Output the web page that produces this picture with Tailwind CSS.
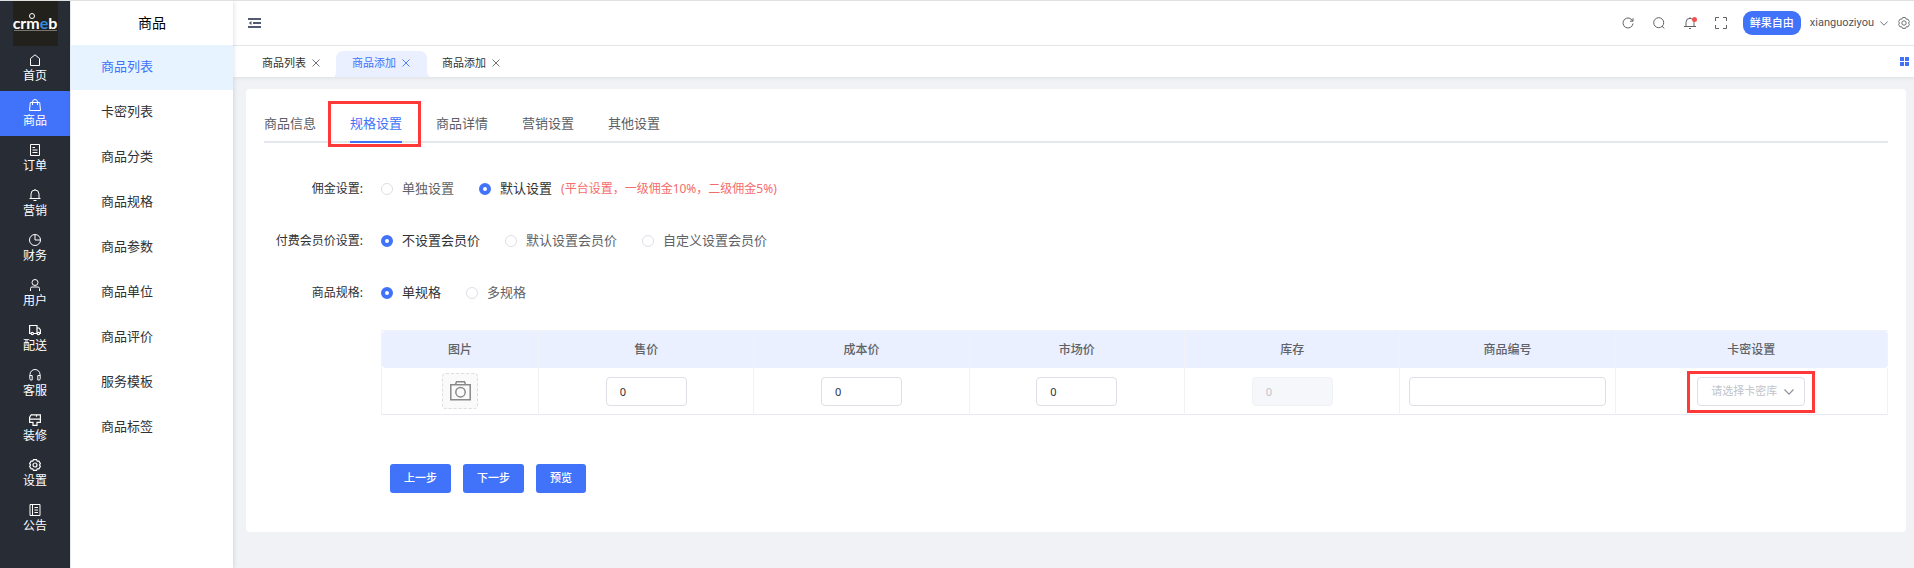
<!DOCTYPE html>
<html lang="zh-CN">

<head>
    <meta charset="UTF-8">
    <meta name="viewport" content="width=device-width, initial-scale=1.0">
    <title>商品添加</title>
    <script src="https://cdn.jsdelivr.net/npm/@tailwindcss/browser@4"></script>
</head>

<body class="flex min-h-screen border-t border-[#dfe1e1] bg-[#f0f2f5] font-['Noto_Sans','Noto_Sans_CJK_SC',sans-serif] text-[13px] text-[#303133]">
    <!-- main menu -->
    <aside class="w-[70px] shrink-0 bg-[#282c34] text-xs text-white">
        <a href="#" class="relative mx-auto flex size-[45px] flex-col items-center bg-[#23211c] pt-3 font-['Lato',sans-serif] text-base leading-5 font-bold">
            <span>crm<span class="text-[#2f8be0]">e</span>b</span>
            <span class="absolute top-3 left-4 size-[6px] rounded-full border border-white"></span>
            <span class="absolute top-[29px] h-px w-[43px] bg-[#77756f]"></span>
        </a>
        <nav class="leading-4">
            <a href="#" class="flex h-[45px] flex-col items-center gap-0.5 pt-2">
                <svg class="size-3" viewBox="0 0 12 12" fill="none" stroke="currentColor"><path d="M1.500 11.500V4.500L6 .8l4.500 3.700v7z" /></svg>
                <span>首页</span>
            </a>
            <a href="#" class="flex h-[45px] flex-col items-center gap-0.5 bg-[#4073fa] pt-2">
                <svg class="size-3" viewBox="0 0 12 12" fill="none" stroke="currentColor"><path d="M1.300 3.500h9.400l.8 8H.5zM3.500 6V3a2.500 2.500 0 0 1 5 0v3" /></svg>
                <span>商品</span>
            </a>
            <a href="#" class="flex h-[45px] flex-col items-center gap-0.5 pt-2">
                <svg class="size-3" viewBox="0 0 12 12" fill="none" stroke="currentColor"><path d="M1.500.5h9v11h-9zM3.500 3.500H6M3.500 6h5M3.500 8.500h5" /></svg>
                <span>订单</span>
            </a>
            <a href="#" class="flex h-[45px] flex-col items-center gap-0.5 pt-2">
                <svg class="size-3" viewBox="0 0 12 12" fill="none" stroke="currentColor"><path d="M.5 9.500h11M2 9.500V5a4 4 0 0 1 8 0v4.500M6 0v1M4.500 11.500h3" /></svg>
                <span>营销</span>
            </a>
            <a href="#" class="flex h-[45px] flex-col items-center gap-0.5 pt-2">
                <svg class="size-3" viewBox="0 0 12 12" fill="none" stroke="currentColor"><circle cx="6" cy="6" r="5.500" /><path d="M6 .5V6h5.500" /></svg>
                <span>财务</span>
            </a>
            <a href="#" class="flex h-[45px] flex-col items-center gap-0.5 pt-2">
                <svg class="size-3" viewBox="0 0 12 12" fill="none" stroke="currentColor"><circle cx="6" cy="3.500" r="3" /><path d="M1.500 12V9.500a1.500 1.500 0 0 1 1.500-1.500h6a1.500 1.500 0 0 1 1.500 1.500V12" /></svg>
                <span>用户</span>
            </a>
            <a href="#" class="flex h-[45px] flex-col items-center gap-0.5 pt-2">
                <svg class="size-3" viewBox="0 0 12 12" fill="none" stroke="currentColor" stroke-width="1.200"><path d="M2 9.500H.6v-8h7.400v8H4.500M8 4h2l1.400 2v3.500H11M8 9.500h.5" /><circle cx="3.300" cy="9.500" r="1.200" /><circle cx="9.500" cy="9.500" r="1.200" /></svg>
                <span>配送</span>
            </a>
            <a href="#" class="flex h-[45px] flex-col items-center gap-0.5 pt-2">
                <svg class="size-3" viewBox="0 0 12 12" fill="none" stroke="currentColor"><path d="M1 7V5.500a5 5 0 0 1 10 0V7M.8 6.500h2.400v4.500H2A1.200 1.200 0 0 1 .8 9.800zM11.200 6.500H8.800v4.500H10a1.200 1.200 0 0 0 1.200-1.200z" /></svg>
                <span>客服</span>
            </a>
            <a href="#" class="flex h-[45px] flex-col items-center gap-0.5 pt-2">
                <svg class="size-3" viewBox="0 0 12 12" fill="none" stroke="currentColor" stroke-width="1.200"><path d="M2 .8h9.400v4.400H.6V3.500L2 .8M7.500.8v2M.6 5.200v3.200h3.400v3h4v-3h3.400V5.200" /></svg>
                <span>装修</span>
            </a>
            <a href="#" class="flex h-[45px] flex-col items-center gap-0.5 pt-2">
                <svg class="size-3" viewBox="0 0 12 12" fill="none" stroke="currentColor" stroke-width="1.200"><path d="M4.500.6h3l.7 1.600 1.700-.1 1.500 2.500L10.500 6l.9 1.400-1.500 2.500-1.700-.1-.7 1.600h-3l-.7-1.600-1.700.1L.6 7.400 1.500 6 .6 4.600l1.500-2.500 1.700.1z" /><circle cx="6" cy="6" r="2" /></svg>
                <span>设置</span>
            </a>
            <a href="#" class="flex h-[45px] flex-col items-center gap-0.5 pt-2">
                <svg class="size-3" viewBox="0 0 12 12" fill="none" stroke="currentColor"><path d="M1 .5h10v11H1zM3.500.5v11M5.500 3.500H9M5.500 6H9M5.500 8.500H9" /></svg>
                <span>公告</span>
            </a>
        </nav>
    </aside>

    <!-- sub menu -->
    <aside class="z-10 w-[163px] shrink-0 border-l border-[#e6e9f0] bg-white shadow-[1px_0_4px_rgba(0,21,41,0.12)]">
        <h1 class="flex h-11 items-center justify-center text-sm text-black">商品</h1>
        <nav>
            <a href="#" class="flex h-[45px] items-center bg-[#e7f3ff] pb-0.5 pl-[30px] text-[#4073fa]">商品列表</a>
            <a href="#" class="flex h-[45px] items-center pb-0.5 pl-[30px]">卡密列表</a>
            <a href="#" class="flex h-[45px] items-center pb-0.5 pl-[30px]">商品分类</a>
            <a href="#" class="flex h-[45px] items-center pb-0.5 pl-[30px]">商品规格</a>
            <a href="#" class="flex h-[45px] items-center pb-0.5 pl-[30px]">商品参数</a>
            <a href="#" class="flex h-[45px] items-center pb-0.5 pl-[30px]">商品单位</a>
            <a href="#" class="flex h-[45px] items-center pb-0.5 pl-[30px]">商品评价</a>
            <a href="#" class="flex h-[45px] items-center pb-0.5 pl-[30px]">服务模板</a>
            <a href="#" class="flex h-[45px] items-center pb-0.5 pl-[30px]">商品标签</a>
        </nav>
    </aside>

    <div class="min-w-0 flex-1">
        <header class="flex h-[45px] items-center border-b border-[#e8eaee] bg-white pr-1 pl-[15px] text-[#515a6e]">
            <button aria-label="折叠菜单">
                <svg class="h-3 w-[13px]" viewBox="0 0 13 12" fill="none" stroke="currentColor" stroke-width="2"><path d="M0 2h13M5 6h8M0 10h13" /><path d="M3.500 4v4L.8 6z" fill="currentColor" stroke="none" /></svg>
            </button>
            <div class="ml-auto flex items-center">
                <div class="mr-4 flex items-center gap-[19px] text-[#606266]">
                    <button aria-label="刷新"><svg class="size-3" viewBox="0 0 12 12" fill="none" stroke="currentColor"><path d="M10.700 4.200A5 5 0 1 0 11 6.500M11 1.200v3H8" /></svg></button>
                    <button aria-label="搜索"><svg class="size-3" viewBox="0 0 12 12" fill="none" stroke="currentColor"><circle cx="5.700" cy="5.700" r="5" /><path d="m9 9.200 2.400 2.300" /></svg></button>
                    <button aria-label="消息" class="relative">
                        <svg class="size-3" viewBox="0 0 12 12" fill="none" stroke="currentColor"><path d="M0 9.500h12M2 9.500V5.300a4 4 0 0 1 8 0v4.200M5 11.500h2M6 .3v1" /></svg>
                        <span class="absolute top-0 -right-px size-[5px] rounded-full bg-[#f55353]"></span>
                    </button>
                    <button aria-label="全屏"><svg class="size-3" viewBox="0 0 12 12" fill="none" stroke="currentColor"><path d="M.5 4V.5H4M8 .5h3.500V4M11.500 8v3.500H8M4 11.500H.5V8" /></svg></button>
                </div>
                <button class="mr-[9px] h-6 rounded-[9px] bg-[#4073fa] px-[7px] text-[11px] font-medium text-white">鲜果自由</button>
                <button class="mr-[10px] flex items-center gap-[6px] font-['Roboto',sans-serif] text-[11px] text-[#515459]">
                    xianguoziyou
                    <svg class="h-[5px] w-2" viewBox="0 0 8 5" fill="none" stroke="currentColor" stroke-width=".8"><path d="m.3.500 3.700 3.700L7.700.5" /></svg>
                </button>
                <button aria-label="系统设置"><svg class="size-3 text-[#606266]" viewBox="0 0 12 12" fill="none" stroke="currentColor" stroke-width=".9"><path d="M4.500.6h3l.7 1.600 1.700-.1 1.500 2.500L10.500 6l.9 1.400-1.500 2.500-1.700-.1-.7 1.600h-3l-.7-1.600-1.700.1L.6 7.400 1.500 6 .6 4.600l1.500-2.500 1.700.1z" /><circle cx="6" cy="6" r="2.200" /></svg></button>
            </div>
        </header>

        <!-- opened pages -->
        <div class="flex h-[31px] items-end bg-white pr-[5px] pl-[14px] text-[11px] shadow-[0_1px_4px_rgba(0,21,41,0.08)]">
            <div class="flex h-[26px] w-[90px] items-center gap-[6px] pb-0.5 pl-[15px]">
                <a href="#">商品列表</a>
                <button aria-label="关闭商品列表"><svg class="size-2" viewBox="0 0 8 8" fill="none" stroke="#606266" stroke-width=".9"><path d="m.5.500 7 7m0-7-7 7" /></svg></button>
            </div>
            <div class="relative flex h-[26px] w-[90px] items-center gap-[6px] pb-0.5 pl-[15px] text-[#4073fa]">
                <svg class="absolute top-0 -left-[3px] h-[26px] w-24" viewBox="0 0 96 26" fill="#eaf0ff"><path d="M0 26q2-2 2-6V8q0-8 8-8h75q8 0 8 8v12q0 4 3 6z" /></svg>
                <a href="#" class="relative">商品添加</a>
                <button aria-label="关闭商品添加" class="relative"><svg class="size-2" viewBox="0 0 8 8" fill="none" stroke="currentColor" stroke-width=".9"><path d="m.5.500 7 7m0-7-7 7" /></svg></button>
            </div>
            <div class="flex h-[26px] w-[90px] items-center gap-[6px] pb-0.5 pl-[15px]">
                <a href="#">商品添加</a>
                <button aria-label="关闭商品添加"><svg class="size-2" viewBox="0 0 8 8" fill="none" stroke="#606266" stroke-width=".9"><path d="m.5.500 7 7m0-7-7 7" /></svg></button>
            </div>
            <button aria-label="标签操作" class="ml-auto self-center"><svg class="size-[9px]" viewBox="0 0 9 9" fill="#4073fa"><path d="M0 0h4v4H0zM5 0h4v4H5zM0 5h4v4H0zM5 5h4v4H5z" /></svg></button>
        </div>

        <main class="pt-3 pr-2 pb-[35px] pl-[13px]">
            <form class="rounded bg-white px-[18px] pt-[18px] pb-[39px]">
                <div class="flex h-9 gap-[34px] border-b-2 border-[#e4e7ed] text-[#5a5e66]">
                    <button type="button" class="-mb-0.5 border-b-2 border-transparent">商品信息</button>
                    <button type="button" class="relative -mb-0.5 border-b-2 border-[#4073fa] text-[#4073fa]">
                        规格设置
                        <span class="absolute -top-[6px] -right-[19px] -bottom-[6px] -left-[22px] border-3 border-[#ff3838]"></span>
                    </button>
                    <button type="button" class="-mb-0.5 border-b-2 border-transparent">商品详情</button>
                    <button type="button" class="-mb-0.5 border-b-2 border-transparent">营销设置</button>
                    <button type="button" class="-mb-0.5 border-b-2 border-transparent">其他设置</button>
                </div>

                <div class="mt-5">
                    <div class="flex h-[52px] items-center" role="radiogroup" aria-labelledby="brokerage">
                        <span id="brokerage" class="w-[117px] shrink-0 pr-[18px] text-right text-xs">佣金设置:</span>
                        <div class="flex items-center gap-[25px] text-[#606266]">
                            <label class="flex items-center gap-[9px]"><input type="radio" name="brokerage" class="size-3 appearance-none rounded-full border border-[#dcdfe6] checked:border-4 checked:border-[#4073fa]">单独设置</label>
                            <label class="flex items-center gap-[9px] text-[#303133]"><input type="radio" name="brokerage" checked class="size-3 appearance-none rounded-full border border-[#dcdfe6] checked:border-4 checked:border-[#4073fa]">默认设置</label>
                        </div>
                        <span class="ml-[9px] text-xs text-[#f56c6c]">(平台设置，一级佣金10%，二级佣金5%)</span>
                    </div>
                    <div class="flex h-[52px] items-center" role="radiogroup" aria-labelledby="vip">
                        <span id="vip" class="w-[117px] shrink-0 pr-[18px] text-right text-xs">付费会员价设置:</span>
                        <div class="flex items-center gap-[25px] text-[#606266]">
                            <label class="flex items-center gap-[9px] text-[#303133]"><input type="radio" name="vip" checked class="size-3 appearance-none rounded-full border border-[#dcdfe6] checked:border-4 checked:border-[#4073fa]">不设置会员价</label>
                            <label class="flex items-center gap-[9px]"><input type="radio" name="vip" class="size-3 appearance-none rounded-full border border-[#dcdfe6] checked:border-4 checked:border-[#4073fa]">默认设置会员价</label>
                            <label class="flex items-center gap-[9px]"><input type="radio" name="vip" class="size-3 appearance-none rounded-full border border-[#dcdfe6] checked:border-4 checked:border-[#4073fa]">自定义设置会员价</label>
                        </div>
                    </div>
                    <div class="flex h-[52px] items-center" role="radiogroup" aria-labelledby="spec">
                        <span id="spec" class="w-[117px] shrink-0 pr-[18px] text-right text-xs">商品规格:</span>
                        <div class="flex items-center gap-[25px] text-[#606266]">
                            <label class="flex items-center gap-[9px] text-[#303133]"><input type="radio" name="spec" checked class="size-3 appearance-none rounded-full border border-[#dcdfe6] checked:border-4 checked:border-[#4073fa]">单规格</label>
                            <label class="flex items-center gap-[9px]"><input type="radio" name="spec" class="size-3 appearance-none rounded-full border border-[#dcdfe6] checked:border-4 checked:border-[#4073fa]">多规格</label>
                        </div>
                    </div>
                </div>

                <div class="mt-[11px] pl-[117px]">
                    <table class="w-full table-fixed border-separate border-spacing-0 border-t border-l border-[#f0f2f5] text-center text-xs">
                        <thead class="text-[#606266]">
                            <tr class="h-[37px]">
                                <th class="w-[157px] rounded-l border-r border-[#f0f2f5] bg-[#eaf0ff] font-medium">图片</th>
                                <th class="w-[14.3%] border-r border-[#f0f2f5] bg-[#eaf0ff] font-medium">售价</th>
                                <th class="w-[14.3%] border-r border-[#f0f2f5] bg-[#eaf0ff] font-medium">成本价</th>
                                <th class="w-[14.3%] border-r border-[#f0f2f5] bg-[#eaf0ff] font-medium">市场价</th>
                                <th class="w-[14.3%] border-r border-[#f0f2f5] bg-[#eaf0ff] font-medium">库存</th>
                                <th class="w-[14.3%] border-r border-[#f0f2f5] bg-[#eaf0ff] font-medium">商品编号</th>
                                <th class="rounded-r border-r border-[#f0f2f5] bg-[#eaf0ff] font-medium">卡密设置</th>
                            </tr>
                        </thead>
                        <tbody>
                            <tr class="h-[47px]">
                                <td class="border-r border-b border-r-[#f0f2f5] border-b-[#e8eaf3]">
                                    <button type="button" aria-label="上传图片" class="mx-auto flex size-9 items-center justify-center rounded border border-dashed border-[#dddddd] bg-[#fafafa]">
                                        <svg class="h-5 w-[21px]" viewBox="0 0 21 20" fill="none" stroke="#898989" stroke-width="1.500"><path d="M.8 3.800h19.400v15H.8zM5.500 3.500l1-2.700h8l1 2.700" /><circle cx="10.500" cy="11.200" r="4.700" /></svg>
                                    </button>
                                </td>
                                <td class="border-r border-b border-r-[#f0f2f5] border-b-[#e8eaf3]"><input type="text" value="0" aria-label="售价" class="mx-auto block h-[29px] w-[81px] rounded border border-[#dcdfe6] px-[13px] text-[11px]"></td>
                                <td class="border-r border-b border-r-[#f0f2f5] border-b-[#e8eaf3]"><input type="text" value="0" aria-label="成本价" class="mx-auto block h-[29px] w-[81px] rounded border border-[#dcdfe6] px-[13px] text-[11px]"></td>
                                <td class="border-r border-b border-r-[#f0f2f5] border-b-[#e8eaf3]"><input type="text" value="0" aria-label="市场价" class="mx-auto block h-[29px] w-[81px] rounded border border-[#dcdfe6] px-[13px] text-[11px]"></td>
                                <td class="border-r border-b border-r-[#f0f2f5] border-b-[#e8eaf3]"><input type="text" value="0" aria-label="库存" disabled class="mx-auto block h-[29px] w-[81px] rounded border border-[#f0f2f5] bg-[#f5f7fa] px-[13px] text-[11px] text-[#c0c4cc]"></td>
                                <td class="border-r border-b border-r-[#f0f2f5] border-b-[#e8eaf3] px-[9px]"><input type="text" aria-label="商品编号" class="block h-[29px] w-full rounded border border-[#dcdfe6] px-[13px] text-[11px]"></td>
                                <td class="border-r border-b border-r-[#f0f2f5] border-b-[#e8eaf3]">
                                    <div class="relative mx-auto h-[29px] w-[108px]">
                                        <select aria-label="卡密设置" class="h-full w-full appearance-none rounded border border-[#dcdfe6] bg-white pl-[13px] text-[11px] text-[#c0c4cc]">
                                            <option>请选择卡密库</option>
                                        </select>
                                        <svg class="pointer-events-none absolute top-3 right-[11px] h-[6px] w-[10px]" viewBox="0 0 10 6" fill="none" stroke="#8d919b" stroke-width="1.200"><path d="m.5.500 4.500 4.600L9.500.5" /></svg>
                                        <span class="pointer-events-none absolute -inset-x-[10px] -top-[6px] -bottom-[7px] border-3 border-[#ff3838]"></span>
                                    </div>
                                </td>
                            </tr>
                        </tbody>
                    </table>
                </div>

                <div class="mt-[49px] flex gap-3 pl-[126px] text-[11px] font-medium text-white">
                    <button type="button" class="h-[29px] rounded-[3px] bg-[#4073fa] px-[14px]">上一步</button>
                    <button type="button" class="h-[29px] rounded-[3px] bg-[#4073fa] px-[14px]">下一步</button>
                    <button type="button" class="h-[29px] rounded-[3px] bg-[#4073fa] px-[14px]">预览</button>
                </div>
            </form>
        </main>
    </div>
</body>

</html>
